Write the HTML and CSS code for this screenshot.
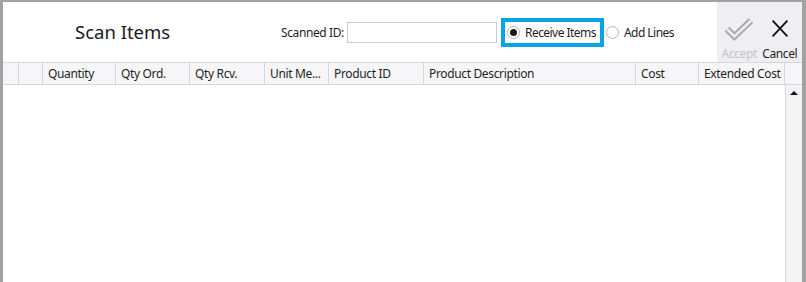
FILE: index.html
```html
<!DOCTYPE html>
<html lang="en">
<head>
	<meta charset="UTF-8">
	<title>Scan Items</title>
	<link rel="stylesheet" href="styles.css">
</head>
<body>
	<div class="window">
		<div class="panel">
			<div class="toolbar">
				<div class="title">Scan Items</div>
				<label class="scan-label" for="scanned">Scanned ID:</label>
				<input class="scan-input" id="scanned" type="text">
				<div class="mode-box">
					<span class="radio checked"></span>
					<span class="radio-text">Receive Items</span>
				</div>
				<div class="mode-plain">
					<span class="radio"></span>
					<span class="radio-text">Add Lines</span>
				</div>
				<div class="actions">
					<div class="action disabled">
						<svg width="34" height="26" viewBox="0 0 34 26">
							<polyline points="4,13 12,21 30,4" fill="none" stroke="#a8a8a8" stroke-width="7" stroke-linejoin="miter"/>
							<polyline points="4,13 12,21 30,4" fill="none" stroke="#ececef" stroke-width="3" stroke-linejoin="miter"/>
						</svg>
						<span>Accept</span>
					</div>
					<div class="action">
						<svg width="20" height="26" viewBox="0 0 20 26">
							<path d="M2 4 L18 21 M18 4 L2 21" stroke="#111" stroke-width="2" fill="none"/>
						</svg>
						<span>Cancel</span>
					</div>
				</div>
			</div>
			<div class="grid-head">
				<div class="cell"></div>
				<div class="cell"></div>
				<div class="cell">Quantity</div>
				<div class="cell">Qty Ord.</div>
				<div class="cell">Qty Rcv.</div>
				<div class="cell">Unit Me...</div>
				<div class="cell">Product ID</div>
				<div class="cell">Product Description</div>
				<div class="cell">Cost</div>
				<div class="cell">Extended Cost</div>
				<div class="cell last"></div>
			</div>
			<div class="grid-body">
				<div class="rows"></div>
				<div class="scrollbar"><span class="arrow-up"></span></div>
			</div>
		</div>
	</div>
</body>
</html>
```

FILE: styles.css
```css
*{margin:0;padding:0;box-sizing:border-box;}
html,body{width:806px;height:282px;overflow:hidden;}
body{font-family:"Segoe UI","Noto Sans","Open Sans",sans-serif;font-size:12px;color:#1e1e1e;background:#a2a2a2;}
.window{height:282px;display:flex;flex-direction:column;padding:2px 4px 0 3px;}
.panel{flex:1;display:flex;flex-direction:column;background:#fff;}

.toolbar{height:60px;display:flex;align-items:center;}
.title{width:278px;padding-left:72px;font-size:18.5px;color:#1a1a1a;padding-bottom:1px;}
.scan-label{width:63px;white-space:nowrap;letter-spacing:-0.4px;}
.scan-input{width:150px;height:21px;margin-left:3px;border:1px solid #c9c9d3;outline:none;}
.mode-box{width:103px;height:29px;margin-left:4px;border:4px solid #06a3e6;display:flex;align-items:center;padding-left:2px;overflow:hidden;}
.mode-plain{display:flex;align-items:center;margin-left:2px;}
.radio{flex:none;width:13px;height:13px;border:1px solid #b4b4b4;border-radius:50%;display:flex;align-items:center;justify-content:center;margin-right:5px;}
.radio.checked::after{content:"";width:7px;height:7px;border-radius:50%;background:#1a1a1a;}
.radio-text{white-space:nowrap;letter-spacing:-0.55px;}

.actions{margin-left:auto;width:85px;height:60px;background:#efeff2;display:flex;padding:0 2px 0 2px;}
.action{flex:1;display:flex;flex-direction:column;align-items:center;padding-top:15px;}
.action span{margin-top:4px;letter-spacing:-0.4px;}
.action.disabled span{color:#c3c3c6;}

.grid-head{height:23px;display:grid;grid-template-columns:16px 24px 73px 74px 75px 64px 95px 212px 63px 86px 17px;border-top:1px solid #d6d6de;border-bottom:1px solid #d6d6de;background:#f6f6f9;}
.cell{border-right:1px solid #d6d6de;padding-left:5px;line-height:21px;white-space:nowrap;overflow:hidden;letter-spacing:-0.35px;}
.cell.last{border-right:none;}

.grid-body{flex:1;display:flex;}
.rows{flex:1;}
.scrollbar{width:17px;background:#f3f3f6;border-left:1px solid #d6d6de;display:flex;justify-content:center;padding-top:6px;}
.arrow-up{width:0;height:0;border-left:4px solid transparent;border-right:4px solid transparent;border-bottom:4px solid #111;}
```
